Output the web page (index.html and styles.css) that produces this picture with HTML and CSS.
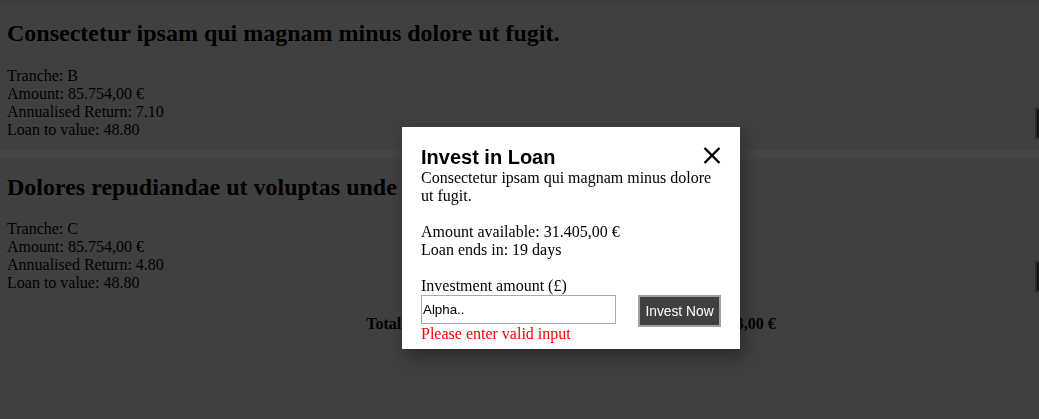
FILE: index.html
```html
<!DOCTYPE html>
<html lang="en">
<head>
<meta charset="utf-8">
<title>Loans</title>
<link rel="stylesheet" href="styles.css">
</head>
<body>
<div class="page">
  <div class="loan-list">
    <div class="loan-card">
      <div class="loan-info">
        <h2 class="loan-title">Consectetur ipsam qui magnam minus dolore ut fugit.</h2>
        <div class="loan-line">Tranche: B</div>
        <div class="loan-line">Amount: 85.754,00 €</div>
        <div class="loan-line">Annualised Return: 7.10</div>
        <div class="loan-line">Loan to value: 48.80</div>
      </div>
      <button class="btn card-btn">Invest in Loan</button>
    </div>
    <div class="loan-card">
      <div class="loan-info">
        <h2 class="loan-title">Dolores repudiandae ut voluptas unde laborum quasi et.</h2>
        <div class="loan-line">Tranche: C</div>
        <div class="loan-line">Amount: 85.754,00 €</div>
        <div class="loan-line">Annualised Return: 4.80</div>
        <div class="loan-line">Loan to value: 48.80</div>
      </div>
      <button class="btn card-btn">Invest in Loan</button>
    </div>
  </div>
  <p class="total">Total amount available for all the investments : 202.913,00 €</p>

  <div class="overlay"></div>
  <div class="modal">
    <div class="modal-head">
      <h3 class="modal-title">Invest in Loan</h3>
      <span class="close" aria-label="Close">
        <svg width="18" height="17" viewBox="0 0 18 17"><path d="M1.5 1 L16.5 16 M16.5 1 L1.5 16" stroke="#000" stroke-width="2.4" fill="none"/></svg>
      </span>
    </div>
    <div class="modal-text">Consectetur ipsam qui magnam minus dolore ut fugit.</div>
    <div class="modal-block">
      <div>Amount available: 31.405,00 €</div>
      <div>Loan ends in: 19 days</div>
    </div>
    <div class="modal-block">
      <label class="field-label" for="amt">Investment amount (£)</label>
      <div class="field-row">
        <input id="amt" class="amount-input" type="text" value="Alpha..">
        <button class="btn invest-btn">Invest Now</button>
      </div>
      <div class="error">Please enter valid input</div>
    </div>
  </div>
</div>
</body>
</html>
```

FILE: styles.css
```css
html, body {
  margin: 0;
  padding: 0;
  overflow: hidden;
  height: 100%;
}
body {
  background: #ededed;
  font-family: "Liberation Serif", "Times New Roman", serif;
  font-size: 16px;
  line-height: 18px;
  color: #000;
}
.page {
  width: 1142px;
  position: relative;
  min-height: 419px;
}
.page::before {
  content: "";
  display: block;
  height: 5px;
  background: #dedede;
}
.loan-list {
  display: flex;
  flex-direction: column;
  gap: 10px;
  background: #ffffff;
}
.loan-card {
  display: flex;
  justify-content: space-between;
  align-items: flex-end;
  background: #ededed;
  padding: 0 7px 10px 7px;
}
.loan-title {
  margin: 15px 0 19px;
  font-size: 24px;
  line-height: 27.6px;
  font-weight: bold;
}
.btn {
  background: #404040;
  color: #fff;
  border: 2px solid #a0a0a0;
  font-family: "Liberation Sans", Arial, sans-serif;
  font-size: 13.333px;
  height: 32px;
  padding: 0 8px;
}
.card-btn {
  width: 100px;
  height: 31px;
}
.total {
  margin: 13px 0 0;
  text-align: center;
  font-weight: bold;
}
.overlay {
  position: fixed;
  inset: 0;
  width: 1142px;
  background: rgba(0, 0, 0, 0.73);
}
.modal {
  position: absolute;
  left: 402px;
  top: 127px;
  width: 300px;
  padding: 19px 19px 6px;
  background: #fff;
  box-shadow: 4px 8px 16px rgba(0, 0, 0, 0.35);
}
.modal-head {
  display: flex;
  justify-content: space-between;
  align-items: flex-start;
}
.modal-title {
  margin: 0;
  font-family: "Liberation Sans", Arial, sans-serif;
  font-size: 20px;
  line-height: 23px;
  font-weight: bold;
}
.close {
  display: block;
  width: 18px;
  height: 17px;
  margin-top: 1px;
}
.close svg { display: block; }
.modal-block {
  margin-top: 18px;
}
.field-label { display: block; }
.field-row {
  display: flex;
  justify-content: space-between;
  align-items: flex-start;
}
.amount-input {
  width: 195px;
  height: 29px;
  box-sizing: border-box;
  border: 1px solid #a9a9a9;
  margin: 0;
  padding: 1px 1px;
  font-family: "Liberation Sans", Arial, sans-serif;
  font-size: 13.333px;
  color: #000;
}
.invest-btn {
  width: 83px;
  padding: 0;
  font-size: 13.8px;
}
.error {
  color: #ff0000;
  margin-top: -2px;
}
```
